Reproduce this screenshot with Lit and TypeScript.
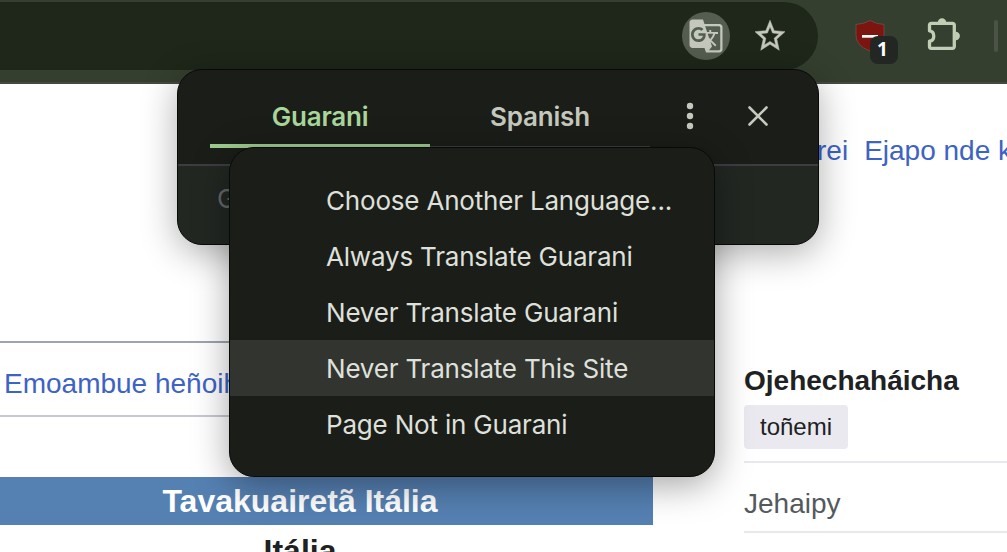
import { LitElement, html, css } from "lit";
import { customElement, state } from "lit/decorators.js";
import { classMap } from "lit/directives/class-map.js";

@customElement("browser-toolbar")
class BrowserToolbar extends LitElement {
  static styles = css`
    :host { display: block; height: 84px; box-sizing: border-box; background: #353f2f; border-bottom: 2px solid #454944; padding-top: 2px; }
    .row { display: flex; align-items: center; height: 68px; }
    .omnibox { width: 818px; height: 68px; box-sizing: border-box; padding-right: 30px; border-radius: 0 34px 34px 0; background: #1e2719; display: flex; align-items: center; justify-content: flex-end; gap: 22px; }
    .circle { width: 48px; height: 48px; border-radius: 50%; background: #555c50; display: flex; align-items: center; justify-content: center; }
    svg { display: block; }
    .shield { position: relative; margin-left: 37px; width: 30px; height: 32px; }
    .badge { position: absolute; left: 15px; top: 16px; width: 28px; height: 28px; border-radius: 8px; background: #222723; color: #fff; font: 700 19px/27px "Open Sans", sans-serif; text-align: center; text-indent: -3px; }
    .puzzle { margin-left: 40px; }
    .bar { margin-left: 33px; width: 4px; height: 32px; border-radius: 2px; background: #4a5345; }
  `;
  render() {
    return html`<div class="row">
      <div class="omnibox">
        <div class="circle">
          <svg width="36" height="36" viewBox="0 0 24 24" fill="#c4c8bd"><path d="M21 4H11l-1-3H3c-1.1 0-2 .9-2 2v15c0 1.1.9 2 2 2h8l1 3h9c1.1 0 2-.9 2-2V6c0-1.1-.9-2-2-2zM7 16c-2.76 0-5-2.24-5-5s2.24-5 5-5c1.35 0 2.48.5 3.35 1.3L9.03 8.57c-.38-.36-1.04-.78-2.03-.78-1.74 0-3.15 1.44-3.15 3.21S5.26 14.21 7 14.21c2.01 0 2.84-1.44 2.92-2.41H7v-1.71h4.68c.07.31.12.61.12 1.02C11.8 13.97 9.89 16 7 16zm6.17-5.42h3.7c-.43 1.25-1.11 2.43-2.05 3.47-.31-.35-.6-.72-.86-1.1l-.79-2.37zm8.33 9.92c0 .55-.45 1-1 1H14l2-2.5-1.04-3.1 3.1 3.1.92-.92-3.3-3.25.02-.02c1.13-1.25 1.93-2.69 2.4-4.22H20v-1.3h-4.53V8h-1.29v1.29h-1.44L11.46 5.5h9.04c.55 0 1 .45 1 1v14z"/></svg>
        </div>
        <svg width="36" height="38" viewBox="0 0 24 24" preserveAspectRatio="none" fill="#c4c8bd" stroke="#c4c8bd" stroke-width=".3"><path d="M22 9.24l-7.19-.62L12 2 9.19 8.63 2 9.24l5.46 4.73L5.82 21 12 17.27 18.18 21l-1.63-7.03L22 9.24zM12 15.4l-3.76 2.27 1-4.28-3.32-2.88 4.38-.38L12 6.1l1.71 4.04 4.38.38-3.32 2.88 1 4.28L12 15.4z"/></svg>
      </div>
      <div class="shield">
        <svg width="30" height="32" viewBox="0 0 30 32"><path d="M15 .5 Q9 4 1 4.500 V15 Q1 26 15 31 Q29 26 29 15 V4.500 Q21 4 15 .5Z" fill="#7c1410" stroke="#6b514b" stroke-width=".8"/><path d="M7 15h16v2.700H7z" fill="#fff"/></svg>
        <div class="badge">1</div>
      </div>
      <svg class="puzzle" width="36" height="36" viewBox="0 0 36 36"><path d="M4.500 7a1.700 1.700 0 0 1 1.700-1.700H27.600a1.700 1.700 0 0 1 1.700 1.700V28.600a1.700 1.700 0 0 1-1.700 1.700H6.200a1.700 1.700 0 0 1-1.700-1.700V23.200C10.200 22.500 10.200 13.500 4.500 12.800Z" fill="none" stroke="#c0ceb5" stroke-width="3.300" stroke-linejoin="round"/><path d="M12.800 4.500a4.200 4.200 0 0 1 8.400 0zM30.700 13.800a4.200 4.200 0 0 1 0 8.400z" fill="#c0ceb5" transform="translate(0 0)"/></svg>
      <div class="bar"></div>
    </div>`;
  }
}

@customElement("wiki-page")
class WikiPage extends LitElement {
  static styles = css`
    :host { display: flex; height: 468px; overflow: hidden; background: #fff; color: #202122; font: 28px/32px "Liberation Sans", Arial, sans-serif; }
    .main { width: 653px; flex: none; padding-top: 257px; }
    .tabs { height: 72px; border-top: 2px solid #9da3af; border-bottom: 2px solid #c6c9d3; display: flex; align-items: center; padding-left: 4px; }
    .tabs a { padding-top: 10px; white-space: nowrap; }
    a { color: #3d63c5; }
    .title { margin-top: 60px; margin-left: -53px; height: 48px; background: #5580b2; color: #fff; font-weight: 700; font-size: 32px; line-height: 48px; text-align: center; }
    .sub { margin-left: -53px; font-weight: 700; font-size: 32px; line-height: 48px; text-align: center; padding-top: 2px; }
    .side { flex: 1; min-width: 0; margin-left: 91px; }
    .links { display: flex; gap: 16px; padding-left: 73px; padding-top: 51px; height: 32px; white-space: nowrap; }
    .head { font-weight: 700; padding-top: 198px; height: 31px; }
    .chip { display: inline-block; margin-top: 9px; height: 44px; width: 104px; border-radius: 4px; background: #e9e9ef; font-size: 24px; line-height: 44px; text-align: center; vertical-align: top; }
    .rule { height: 2px; background: #e8e8ee; }
    .chip + .rule { margin-top: 12px; }
    .entry { color: #54595d; height: 32px; padding: 25px 0 11px; }
  `;
  render() {
    return html`
      <div class="main">
        <div class="tabs"><a>Emoambue heñoih</a></div>
        <div class="title">Tavakuairetã Itália</div>
        <div class="sub">Itália</div>
      </div>
      <div class="side">
        <div class="links"><a>rei</a><a>Ejapo nde k</a></div>
        <div class="head">Ojehechaháicha</div>
        <div class="chip">toñemi</div>
        <div class="rule"></div>
        <div class="entry">Jehaipy</div>
        <div class="rule"></div>
      </div>`;
  }
}

@customElement("translate-bubble")
class TranslateBubble extends LitElement {
  static styles = css`
    :host { display: block; position: absolute; left: 177px; top: 69px; width: 642px; height: 176px; box-sizing: border-box; border-radius: 25px; border: 1px solid #080a07; overflow: hidden; background: #1b1d18; box-shadow: 0 8px 36px rgba(0, 0, 0, 0.32); font-family: Inter, sans-serif; }
    .top { height: 94px; border-bottom: 2px solid #3c3d40; display: flex; padding-left: 32px; }
    .tab { width: 220px; height: 78px; box-sizing: border-box; text-align: center; font-size: 26px; font-weight: 600; letter-spacing: -0.2px; line-height: 94px; color: #c4c8bd; border-bottom: 2px solid #3c3d40; }
    .tab.active { color: #a9d69b; border-bottom: 4px solid #9ccb8e; }
    .icons { display: flex; height: 92px; align-items: center; }
    .dots { margin-left: 29px; }
    .close { margin-left: 47px; }
    .foot { height: 80px; background: #222722; box-sizing: border-box; padding-left: 39px; color: #65676a; font-size: 26px; line-height: 66px; }
  `;
  @state() active = "Guarani";
  render() {
    return html`
      <div class="top">
        ${["Guarani", "Spanish"].map(
          (t) => html`<div class=${classMap({ tab: true, active: t === this.active })} @click=${() => (this.active = t)}>${t}</div>`
        )}
        <div class="icons">
          <svg class="dots" width="22" height="30" viewBox="0 0 22 30" fill="#c4c8bd"><circle cx="11" cy="5" r="3.200"/><circle cx="11" cy="15" r="3.200"/><circle cx="11" cy="25" r="3.200"/></svg>
          <svg class="close" width="20" height="20" viewBox="0 0 20 20"><path d="M1.500 1.500l17 17M18.500 1.500l-17 17" stroke="#c4c8bd" stroke-width="2.600" stroke-linecap="round"/></svg>
        </div>
      </div>
      <div class="foot">G</div>`;
  }
}

@customElement("options-menu")
class OptionsMenu extends LitElement {
  static styles = css`
    :host { display: block; position: absolute; left: 229px; top: 147px; width: 486px; height: 330px; box-sizing: border-box; padding: 24px 0; border: 1px solid #080a07; border-radius: 25px; overflow: hidden; background: #1b1d18; box-shadow: 0 8px 36px rgba(0, 0, 0, 0.36); }
    .item { height: 56px; padding-left: 96px; font: 400 26px/58px Inter, sans-serif; letter-spacing: -0.19px; color: #dfe0db; white-space: nowrap; }
    .item.hover { background: #32342f; }
  `;
  @state() hovered = 3;
  render() {
    const items = ["Choose Another Language...", "Always Translate Guarani", "Never Translate Guarani", "Never Translate This Site", "Page Not in Guarani"];
    return items.map((label, i) => html`<div class=${classMap({ item: true, hover: i === this.hovered })}>${label}</div>`);
  }
}

@customElement("app-root")
class AppRoot extends LitElement {
  static styles = css`
    :host { display: block; position: relative; width: 1007px; height: 552px; overflow: hidden; }
  `;
  render() {
    return html`<browser-toolbar></browser-toolbar><wiki-page></wiki-page><translate-bubble></translate-bubble><options-menu></options-menu>`;
  }
}
